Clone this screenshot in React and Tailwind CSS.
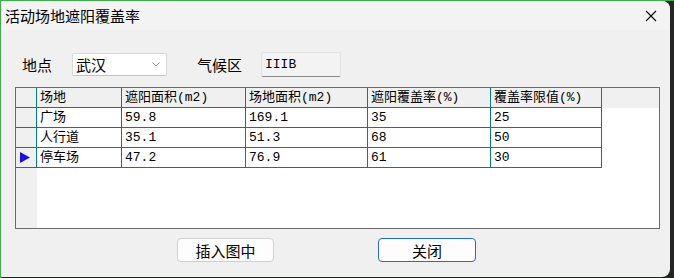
import React from 'react';

const COLS = [
  { key: 'name', title: '场地', w: 'w-[85px]' },
  { key: 'shade', title: '遮阳面积(m2)', w: 'w-[124px]' },
  { key: 'site', title: '场地面积(m2)', w: 'w-[122px]' },
  { key: 'rate', title: '遮阳覆盖率(%)', w: 'w-[123px]' },
  { key: 'limit', title: '覆盖率限值(%)', w: 'w-[111px]' },
];

const ROWS = [
  { name: '广场', shade: '59.8', site: '169.1', rate: '35', limit: '25' },
  { name: '人行道', shade: '35.1', site: '51.3', rate: '68', limit: '50' },
  { name: '停车场', shade: '47.2', site: '76.9', rate: '61', limit: '30', current: true },
];

const ui = { fontFamily: '"Noto Sans CJK SC", "Noto Sans", sans-serif' };
const cell = { fontFamily: '"Liberation Mono", "Noto Sans CJK SC", monospace' };

function Cell({ w, children }) {
  return (
    <div className={`${w} h-[20px] shrink-0 border-r border-b border-[#008080] pl-[3px] flex items-center text-[13px] leading-none text-black whitespace-nowrap`} style={cell}>
      {children}
    </div>
  );
}

export default function App() {
  return (
    <div className="w-[674px] h-[278px] bg-[#232623] border-t border-l border-[#3fae4a] overflow-hidden">
      <div className="w-[669px] h-[276px] bg-[#f0f0f0] rounded-r-[8px] flex flex-col" style={ui}>
        {/* title bar */}
        <div className="h-[29px] bg-[#f3f3f3] flex items-center justify-between pl-[4px] pr-[13px] rounded-tr-[8px]">
          <span className="text-[15px] text-black leading-none">活动场地遮阳覆盖率</span>
          <svg width="12" height="12" viewBox="0 0 12 12" className="text-black">
            <path d="M1 1 L11 11 M11 1 L1 11" stroke="currentColor" strokeWidth="1.1" />
          </svg>
        </div>

        <div className="px-[14px] flex flex-col">
          {/* location row */}
          <div className="mt-[22px] pl-[7px] flex items-center h-[25px]">
            <span className="w-[50px] text-[15px] text-black leading-none">地点</span>
            <div className="w-[95px] h-[23px] bg-white border border-[#dadada] border-b-[#c4c4c4] rounded-[2px] flex items-center justify-between pl-[3px] pr-[6px]">
              <span className="text-[15px] text-black leading-none">武汉</span>
              <svg width="8" height="5" viewBox="0 0 8 5">
                <path d="M0.5 0.5 L4 4 L7.5 0.5" fill="none" stroke="#8a8a8a" strokeWidth="1" />
              </svg>
            </div>
            <span className="ml-[30px] w-[64px] text-[15px] text-black leading-none">气候区</span>
            <div className="w-[80px] h-[25px] bg-[#f3f3f3] border border-[#e2e2e2] border-b-[#8a8a8a] rounded-[2px] flex items-center pl-[3px]">
              <span className="text-[13px] text-black leading-none" style={cell}>IIIB</span>
            </div>
          </div>

          {/* data grid */}
          <div className="mt-[10px] w-[645px] h-[142px] border border-[#6b6b6b] bg-white flex">
            <div className="w-[21px] shrink-0 bg-[#f0f0f0] flex flex-col">
              <div className="h-[20px] border-r border-b border-[#008080]" />
              {ROWS.map((r) => (
                <div key={r.name} className="h-[20px] border-r border-b border-[#008080] flex items-center pl-[4px]">
                  {r.current && (
                    <svg width="11" height="11" viewBox="0 0 11 11">
                      <path d="M0 0 L10 5.5 L0 11 Z" fill="#1414e6" />
                    </svg>
                  )}
                </div>
              ))}
            </div>
            <div className="flex-1 flex flex-col">
              <div className="flex bg-[#f0f0f0]">
                {COLS.map((c) => (
                  <Cell key={c.key} w={c.w}>{c.title}</Cell>
                ))}
              </div>
              {ROWS.map((r) => (
                <div key={r.name} className="flex">
                  {COLS.map((c) => (
                    <Cell key={c.key} w={c.w}>{r[c.key]}</Cell>
                  ))}
                </div>
              ))}
            </div>
          </div>

          {/* buttons */}
          <div className="mt-[9px] pl-[162px] flex gap-[104px]">
            <button className="w-[97px] h-[24px] bg-[#fdfdfd] border border-[#d0d0d0] rounded-[4px] text-[15px] text-black leading-none">
              插入图中
            </button>
            <button className="w-[98px] h-[24px] bg-[#fdfdfd] border border-[#1f6fbf] rounded-[4px] text-[15px] text-black leading-none">
              关闭
            </button>
          </div>
        </div>
      </div>
    </div>
  );
}
